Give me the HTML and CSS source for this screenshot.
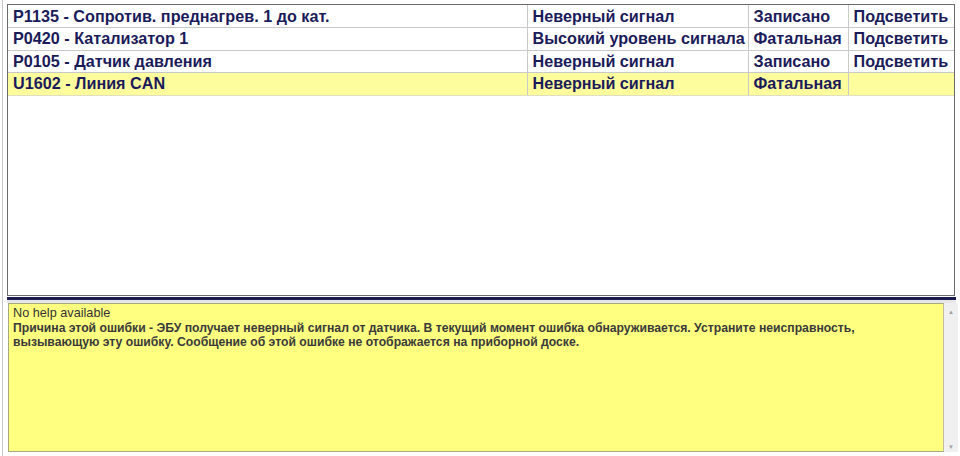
FILE: index.html
```html
<!DOCTYPE html>
<html lang="ru">
<head>
    <meta charset="UTF-8">
    <title>Коды неисправностей</title>
    <link rel="stylesheet" href="styles.css">
</head>
<body>
    <div class="frame">
        <div class="dtc-list">
            <table class="dtc-table">
                <colgroup>
                    <col class="col-code">
                    <col class="col-type">
                    <col class="col-state">
                    <col class="col-action">
                </colgroup>
                <tr>
                    <td>P1135 - Сопротив. преднагрев. 1 до кат.</td>
                    <td>Неверный сигнал</td>
                    <td>Записано</td>
                    <td>Подсветить</td>
                </tr>
                <tr>
                    <td>P0420 - Катализатор 1</td>
                    <td>Высокий уровень сигнала</td>
                    <td>Фатальная</td>
                    <td>Подсветить</td>
                </tr>
                <tr>
                    <td>P0105 - Датчик давления</td>
                    <td>Неверный сигнал</td>
                    <td>Записано</td>
                    <td>Подсветить</td>
                </tr>
                <tr class="selected">
                    <td>U1602 - Линия CAN</td>
                    <td>Неверный сигнал</td>
                    <td>Фатальная</td>
                    <td></td>
                </tr>
            </table>
        </div>

        <div class="splitter"></div>

        <div class="help-area">
            <div class="help-text">
                <div class="help-title">No help available</div>
                <div class="help-body">Причина этой ошибки - ЭБУ получает неверный сигнал от датчика. В текущий момент ошибка обнаруживается. Устраните неисправность, вызывающую эту ошибку. Сообщение об этой ошибке не отображается на приборной доске.</div>
            </div>
            <div class="scrollbar">
                <span class="arrow">&#9650;</span>
                <span class="arrow">&#9660;</span>
            </div>
        </div>
    </div>
</body>
</html>
```

FILE: styles.css
```css
body {
    margin: 0;
    padding: 0;
    background-color: #ffffff;
    font-family: "Liberation Sans", Arial, sans-serif;
}
.frame {
    width: 957px;
    height: 456px;
    box-sizing: border-box;
    border-left: 1px solid #c8c8c8;
    margin-left: 2px;
    padding: 4px 0 0 4px;
}
.dtc-list {
    width: 948px;
    height: 292px;
    box-sizing: border-box;
    border: 1px solid #6a6a6a;
    background-color: #ffffff;
}
.dtc-table {
    width: 100%;
    border-collapse: collapse;
    table-layout: fixed;
}
.col-code {
    width: 519px;
}
.col-type {
    width: 221px;
}
.col-state {
    width: 100px;
}
.dtc-table td {
    height: 22.5px;
    box-sizing: border-box;
    padding: 0 0 0 5px;
    border-bottom: 1px solid #c9c9c9;
    border-left: 1px solid #c9c9c9;
    color: #1b1b5a;
    font-weight: bold;
    font-size: 16.2px;
    white-space: nowrap;
    overflow: hidden;
    vertical-align: middle;
}
.dtc-table td:first-child {
    border-left: none;
}
.dtc-table .selected td {
    background-color: #fdfd9e;
    border-bottom-color: #e0e0c0;
}
.splitter {
    width: 949px;
    height: 3px;
    margin-top: 1px;
    background-color: #1a1a4e;
    border-bottom: 3px solid #e6e6e6;
}
.help-area {
    display: flex;
    width: 950px;
    height: 149px;
    margin-left: 1px;
}
.help-text {
    flex: 1;
    box-sizing: border-box;
    background-color: #ffff80;
    border: 1px solid #a8a880;
    border-right-color: #c0c0a0;
    padding: 2px 4px;
    color: #333333;
    font-family: "Liberation Sans", Arial, sans-serif;
    font-size: 12.2px;
    line-height: 14.5px;
}
.help-title {
    font-size: 12.7px;
}
.help-body {
    font-weight: bold;
    color: #3a3a3a;
    padding-right: 10px;
}
.scrollbar {
    width: 14px;
    background-color: #f0f0f0;
    display: flex;
    flex-direction: column;
    justify-content: space-between;
    align-items: center;
    padding: 6px 0 2px;
}
.arrow {
    font-size: 6px;
    color: #a0a0a0;
}
```
